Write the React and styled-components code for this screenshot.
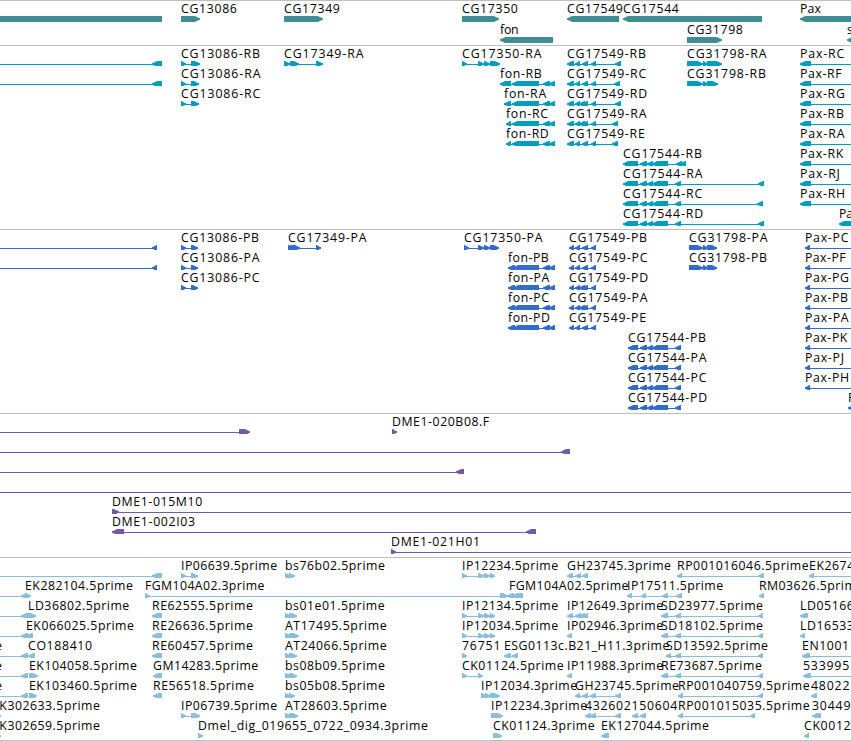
import React from 'react';
import styled, { createGlobalStyle } from 'styled-components';

const WIDTH = 851;

const GlobalStyle = createGlobalStyle`
    body {
        margin: 0;
        background: #fff;
    }
`;

const Browser = styled.main`
    width: ${WIDTH}px;
    height: 741px;
    overflow: hidden;
    display: flex;
    flex-direction: column;
    background: #fff;
`;

const Track = styled.section`
    display: flex;
    flex-direction: column;
    box-sizing: border-box;
    flex: none;
    height: ${props => props.$height}px;
    border-top: 1px solid #bebebe;
    color: ${props => props.$color};
`;

const Lane = styled.svg`
    display: block;
    flex: none;
    width: ${WIDTH}px;
    height: ${props => props.$height}px;
`;

const Label = styled.text`
    fill: #000;
    font-family: "Open Sans", "Noto Sans", sans-serif;
    font-size: 12.3px;
`;

const BottomRule = styled.div`
    flex: none;
    height: 1px;
    background: #bebebe;
`;

// Advance widths of the label characters, digits are 7.7
const ADVANCE = {
    A: 8.6, B: 8, C: 8.4, D: 9.2, E: 7, F: 5.6, G: 9, H: 9.2, I: 3.2, J: 4, K: 7.4, L: 6.2,
    M: 10.4, N: 9.2, O: 9.4, P: 7.1, R: 8, S: 7, T: 7.2,
    a: 7, b: 7.7, c: 6.4, d: 7.7, e: 7.5, f: 3.8, g: 7.7, i: 3.5, l: 3.4, m: 11.8, n: 7.5,
    o: 7.3, p: 7.8, r: 5.2, s: 6.3, x: 6.8, '-': 7, '_': 6, '.': 3.8,
};

const labelWidth = label => [...label].reduce((sum, ch) => sum + (ADVANCE[ch] ?? 7.7), 0);

// f(label, label x, strand, exons, line from, line to)
const f = (label, x, dir, segs, from, to) => ({ label, x, dir, segs, from, to });

const gene = (label, dir, a, b) => f(label, a, dir, [[a, b]]);

const cg17549 = (label, x, last, dense) => f(label, x, -1, [
    [x, 574], [575, 580],
    ...(dense ? [[579, 585]] : []),
    [582, 588], [591, 596],
    ...(last ? [[last, last + 6]] : []),
]);
const cg17544R = (label, tail) => f(label, 623, -1, [[623, 638], [640, 647], [647, 653], [652, 668], ...tail]);
const cg17544P = label => f(label, 628, -1, [[628, 638], [640, 647], [647, 653], [652, 668], [675, 681]]);
const fonR = (label, x, end = 511) => f(label, x, -1, [[x, end], [512, 539], [543, 550], [549, 555]]);
const fonP = label => f(label, 508, -1, [[508, 515], [513, 539], [543, 550], [549, 555]]);
const paxR = label => f(label, 800, -1, [[800, 811]], 800, 860);
const paxP = label => f(label, 805, -1, [[805, 810]], 805, 860);
const cg13086 = (label, end) => f(label, 181, 1, [[181, 186], [191, end]]);
const fromLeft = (a, b, dir = -1) => f('', 0, dir, [[a, b]], -10, b);
const ip = label => f(label, 462, 1, [[462, 467], [478, 484], [484, 490], [490, 495]]);
const at = (label, end) => f(label, 285, 1, [[285, 291], [289, end]]);
const sd = (label, x) => f(label, x, -1, [[x, x < 665 ? 668 : 671], [675, 681], [758, 763]]);

const tracks = [
    {
        name: 'gene',
        color: '#408e94',
        height: 45,
        lane: 21,
        rows: [
            [
                f('', 0, -1, [[-20, 162]]),
                gene('CG13086', 1, 181, 200),
                gene('CG17349', 1, 284, 323),
                gene('CG17350', 1, 462, 499),
                gene('CG17549', -1, 567, 619),
                gene('CG17544', -1, 623, 762),
                gene('Pax', -1, 800, 880),
            ],
            [
                gene('fon', -1, 500, 553),
                gene('CG31798', 1, 687, 722),
                gene('s', -1, 847, 880),
            ],
        ],
    },
    {
        name: 'mrna',
        color: '#009ebe',
        height: 184,
        lane: 20,
        rows: [
            [
                fromLeft(152, 162),
                cg13086('CG13086-RB', 200),
                f('CG17349-RA', 284, 1, [[284, 290], [290, 299], [316, 323]]),
                f('CG17350-RA', 462, 1, [[462, 467], [478, 484], [484, 490], [490, 500]]),
                cg17549('CG17549-RB', 567, 615),
                f('CG31798-RA', 687, 1, [[687, 703], [703, 708], [707, 722]]),
                paxR('Pax-RC'),
            ],
            [
                fromLeft(152, 162),
                cg13086('CG13086-RA', 199),
                fonR('fon-RB', 500),
                cg17549('CG17549-RC', 567, 614),
                f('CG31798-RB', 687, 1, [[687, 703], [703, 708], [707, 718]]),
                paxR('Pax-RF'),
            ],
            [
                cg13086('CG13086-RC', 199),
                fonR('fon-RA', 504),
                cg17549('CG17549-RD', 567, 615, true),
                paxR('Pax-RG'),
            ],
            [fonR('fon-RC', 506), cg17549('CG17549-RA', 567, 612, true), paxR('Pax-RB')],
            [fonR('fon-RD', 506), cg17549('CG17549-RE', 567, 612), paxR('Pax-RA')],
            [cg17544R('CG17544-RB', [[676, 682], [680, 686]]), paxR('Pax-RK')],
            [cg17544R('CG17544-RA', [[675, 681], [758, 764]]), paxR('Pax-RJ')],
            [cg17544R('CG17544-RC', [[675, 681], [757, 763]]), paxR('Pax-RH')],
            [cg17544R('CG17544-RD', [[675, 681], [758, 764]]), gene('Pa', -1, 839, 880)],
        ],
    },
    {
        name: 'cds',
        color: '#316bcb',
        height: 184,
        lane: 20,
        rows: [
            [
                fromLeft(152, 157),
                cg13086('CG13086-PB', 198),
                f('CG17349-PA', 288, 1, [[288, 293], [290, 295], [292, 300], [316, 321]]),
                f('CG17350-PA', 464, 1, [[464, 469], [478, 484], [484, 490], [490, 499]]),
                cg17549('CG17549-PB', 569),
                f('CG31798-PA', 689, 1, [[689, 703], [703, 708], [707, 717]]),
                paxP('Pax-PC'),
            ],
            [
                fromLeft(152, 157),
                cg13086('CG13086-PA', 198),
                fonP('fon-PB'),
                cg17549('CG17549-PC', 569),
                f('CG31798-PB', 689, 1, [[689, 703], [703, 708], [707, 717]]),
                paxP('Pax-PF'),
            ],
            [cg13086('CG13086-PC', 198), fonP('fon-PA'), cg17549('CG17549-PD', 569, 0, true), paxP('Pax-PG')],
            [fonP('fon-PC'), cg17549('CG17549-PA', 569, 0, true), paxP('Pax-PB')],
            [fonP('fon-PD'), cg17549('CG17549-PE', 569), paxP('Pax-PA')],
            [cg17544P('CG17544-PB'), paxP('Pax-PK')],
            [cg17544P('CG17544-PA'), paxP('Pax-PJ')],
            [cg17544P('CG17544-PC'), paxP('Pax-PH')],
            [cg17544P('CG17544-PD'), gene('P', -1, 848, 880)],
        ],
    },
    {
        name: 'bac',
        color: '#7659a6',
        height: 144,
        lane: 20,
        rows: [
            [fromLeft(239, 250, 1), gene('DME1-020B08.F', 1, 392, 397)],
            [fromLeft(561, 570)],
            [fromLeft(456, 464)],
            [f('', 0, 1, [], -10, 860)],
            [f('DME1-015M10', 112, 1, [[112, 119]], 112, 860)],
            [f('DME1-002I03', 112, -1, [[112, 124], [526, 536]])],
            [f('DME1-021H01', 391, 1, [[391, 396]], 391, 860)],
        ],
    },
    {
        name: 'est',
        color: '#8bbddc',
        height: 183,
        lane: 20,
        rows: [
            [
                fromLeft(152, 162),
                cg13086('IP06639.5prime', 198),
                at('bs76b02.5prime', 295),
                ip('IP12234.5prime'),
                f('GH23745.3prime', 567, -1, [[567, 573], [575, 581], [582, 588]]),
                f('RP001016046.5prime', 677, -1, [[677, 682], [758, 764]]),
                f('EK2674', 809, -1, [[809, 814]], 809, 860),
            ],
            [
                fromLeft(21, 27),
                f('EK282104.5prime', 25, 1, [[25, 31]]),
                f('FGM104A02.3prime', 145, 1, [[145, 150], [500, 508]]),
                f('FGM104A02.5prime', 509, -1, [[507, 514], [512, 523]]),
                f('IP17511.5prime', 627, -1, [[627, 632], [641, 646], [662, 668], [676, 682]]),
                gene('RM03626.5prime', -1, 759, 764),
            ],
            [
                fromLeft(21, 28),
                gene('LD36802.5prime', 1, 28, 36),
                gene('RE62555.5prime', -1, 152, 162),
                at('bs01e01.5prime', 297),
                ip('IP12134.5prime'),
                f('IP12649.3prime', 567, -1, [[567, 573], [575, 581], [579, 585], [583, 588]]),
                sd('SD23977.5prime', 661),
                gene('LD05166', -1, 800, 808),
            ],
            [
                fromLeft(21, 28),
                f('EK066025.5prime', 26, -1, [[26, 33]]),
                gene('RE26636.5prime', -1, 152, 162),
                at('AT17495.5prime', 299),
                ip('IP12034.5prime'),
                gene('IP02946.3prime', -1, 567, 572),
                sd('SD18102.5prime', 661),
                gene('LD16533', -1, 800, 805),
            ],
            [
                f('e', -5, 1, []),
                fromLeft(21, 28),
                gene('CO188410', -1, 28, 35),
                gene('RE60457.5prime', -1, 152, 162),
                at('AT24066.5prime', 297),
                gene('76751', 1, 462, 467),
                f('ESG0113c.B21_H11.3prime', 504, -1, [[504, 511], [512, 518]]),
                sd('SD13592.5prime', 666),
                f('EN1001', 802, -1, [[802, 810]], 802, 860),
            ],
            [
                f('e', -5, 1, []),
                fromLeft(21, 28),
                gene('EK104058.5prime', 1, 29, 38),
                gene('GM14283.5prime', -1, 153, 162),
                at('bs08b09.5prime', 297),
                f('CK01124.5prime', 462, 1, [[462, 467], [478, 483]]),
                gene('IP11988.3prime', -1, 567, 572),
                sd('RE73687.5prime', 661),
                f('533995', 803, -1, [[803, 811]], 803, 860),
            ],
            [
                f('e', -5, 1, []),
                fromLeft(21, 28),
                gene('EK103460.5prime', 1, 29, 37),
                gene('RE56518.5prime', -1, 153, 162),
                at('bs05b08.5prime', 295),
                f('IP12034.3prime', 481, 1, [[481, 487], [485, 491], [490, 500]]),
                f('GH23745.5prime', 575, -1, [[575, 580], [582, 588], [590, 596], [615, 621]]),
                f('RP001040759.5prime', 678, -1, [[678, 683], [758, 763]]),
                gene('48022', -1, 811, 817),
            ],
            [
                gene('EK302633.5prime', 1, -8, 1),
                cg13086('IP06739.5prime', 200),
                at('AT28603.5prime', 298),
                gene('IP12234.3prime', 1, 491, 503),
                f('432602150604', 585, -1, [[585, 591], [590, 596], [615, 621]]),
                f('', 632, -1, [[632, 638], [640, 646]]),
                f('RP001015035.5prime', 678, -1, [[678, 683], [750, 755]]),
                gene('30449', -1, 812, 821),
            ],
            [
                gene('EK302659.5prime', 1, -8, 1),
                gene('Dmel_dig_019655_0722_0934.3prime', 1, 198, 203),
                gene('CK01124.3prime', 1, 493, 502),
                gene('EK127044.5prime', -1, 601, 609),
                gene('CK0012', -1, 804, 809),
            ],
        ],
    },
];

// An exon is six pixels tall, with a blunt pointed end on the strand's side
function Exon({ start, end, dir }) {
    const head = Math.min(end - start, 6) - 0.8;
    const tip = dir > 0 ? end : start;
    const back = dir > 0 ? start : end;
    const neck = tip - dir * head;
    const cheek = tip - dir * 2;
    return (
        <polygon
            fill="currentColor"
            points={`${back},15 ${neck},15 ${cheek},16.4 ${tip},17.3 ${tip},18.7 ${cheek},19.6 ${neck},21 ${back},21`}
        />
    );
}

function Feature({ label, x, dir, segs, from, to }) {
    const start = from ?? (segs.length ? segs[0][0] : 0);
    const end = to ?? (segs.length ? segs[segs.length - 1][1] : 0);
    return (
        <g>
            {end > start && (segs.length !== 1 || from !== undefined) && (
                <rect x={start} y="18" width={end - start} height="1" fill="currentColor" />
            )}
            {segs.map(([a, b]) => <Exon key={a} start={a} end={b} dir={dir} />)}
            {label && (
                <Label x={x} y="12" textLength={labelWidth(label)}>{label}</Label>
            )}
        </g>
    );
}

function App() {
    return (
        <>
            <GlobalStyle />
            <Browser>
                {tracks.map(track => (
                    <Track key={track.name} $height={track.height} $color={track.color}>
                        {track.rows.map((row, i) => (
                            <Lane key={i} $height={track.lane}>
                                {row.map((item, j) => <Feature key={j} {...item} />)}
                            </Lane>
                        ))}
                    </Track>
                ))}
                <BottomRule />
            </Browser>
        </>
    );
}

export default App;
